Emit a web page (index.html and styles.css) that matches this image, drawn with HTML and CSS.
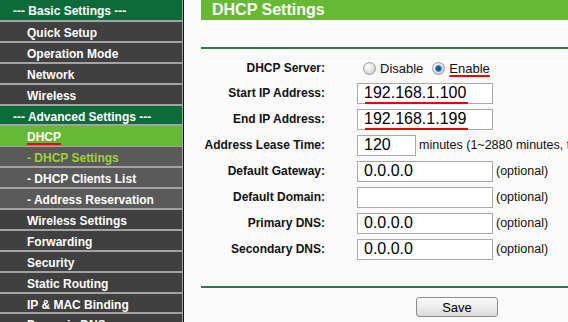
FILE: index.html
```html
<!DOCTYPE html>
<html>
<head>
<meta charset="utf-8">
<link rel="stylesheet" href="styles.css">
</head>
<body>
<div class="page">
  <nav class="sidebar">
    <div class="item section first">--- Basic Settings ---</div>
    <div class="item">Quick Setup</div>
    <div class="item">Operation Mode</div>
    <div class="item">Network</div>
    <div class="item">Wireless</div>
    <div class="item section">--- Advanced Settings ---</div>
    <div class="item active"><span class="mark">DHCP</span></div>
    <div class="item sub current">- DHCP Settings</div>
    <div class="item sub">- DHCP Clients List</div>
    <div class="item sub">- Address Reservation</div>
    <div class="item">Wireless Settings</div>
    <div class="item">Forwarding</div>
    <div class="item">Security</div>
    <div class="item">Static Routing</div>
    <div class="item">IP &amp; MAC Binding</div>
    <div class="item">Dynamic DNS</div>
  </nav>
  <main class="content">
    <h1 class="title">DHCP Settings</h1>
    <div class="rule top"></div>
    <div class="form">
      <div class="lbl">DHCP Server:</div>
      <div class="field">
        <span class="radio first-radio"></span><span class="rtext">Disable</span>
        <span class="radio checked"></span><span class="rtext"><span class="mark">Enable</span></span>
      </div>

      <div class="lbl">Start IP Address:</div>
      <div class="field"><span class="inwrap marked"><input class="inp" value="192.168.1.100"></span></div>

      <div class="lbl">End IP Address:</div>
      <div class="field"><span class="inwrap marked"><input class="inp" value="192.168.1.199"></span></div>

      <div class="lbl">Address Lease Time:</div>
      <div class="field"><input class="inp short" value="120"><span class="note">minutes (1~2880 minutes, the default value is 120)</span></div>

      <div class="lbl">Default Gateway:</div>
      <div class="field"><input class="inp" value="0.0.0.0"><span class="note">(optional)</span></div>

      <div class="lbl">Default Domain:</div>
      <div class="field"><input class="inp" value=""><span class="note">(optional)</span></div>

      <div class="lbl">Primary DNS:</div>
      <div class="field"><input class="inp" value="0.0.0.0"><span class="note">(optional)</span></div>

      <div class="lbl">Secondary DNS:</div>
      <div class="field"><input class="inp" value="0.0.0.0"><span class="note">(optional)</span></div>
    </div>
    <div class="rule bottom"></div>
    <div class="actions"><button class="btn">Save</button></div>
  </main>
</div>
</body>
</html>
```

FILE: styles.css
```css
html, body {
  margin: 0;
  padding: 0;
  height: 322px;
  overflow: hidden;
  background: #fafafa;
  font-family: "Liberation Sans", Arial, sans-serif;
}

.page {
  display: flex;
  height: 322px;
  overflow: hidden;
}

.sidebar {
  width: 182px;
  flex: none;
  background: #404040;
  border-right: 1px solid #a3a3a3;
  box-shadow: 1px 0 0 #151515;
  margin-right: 1px;
}

.item {
  height: 16.9px;
  line-height: 18.9px;
  padding-top: 2px;
  border-bottom: 2px solid #a3a3a3;
  background: #404040;
  color: #fff;
  font-weight: bold;
  font-size: 12px;
  padding-left: 27px;
  white-space: nowrap;
}

.item.first {
  height: 18px;
  line-height: 19px;
}

.item.section {
  background: #0b6c3a;
  padding-left: 13px;
}

.item.active {
  background: #66b933;
  border-bottom-width: 1px;
  height: 17.9px;
}

.item.sub {
  background: #5a5a5a;
}

.item.current {
  color: #9fd03c;
}

.mark {
  text-decoration: underline;
  text-decoration-color: #e8000b;
  text-decoration-thickness: 2px;
  text-underline-offset: 2px;
}

.content {
  flex: 1;
  min-width: 0;
  margin-left: 17px;
  overflow: hidden;
}

.title {
  margin: 0;
  height: 20px;
  line-height: 20px;
  background: #66b933;
  color: #fff;
  font-size: 16px;
  font-weight: bold;
  padding-left: 11px;
  white-space: nowrap;
}

.rule {
  height: 2px;
  background: #2a7a4c;
}

.rule.top {
  margin-top: 27px;
}

.rule.bottom {
  margin-top: 24px;
}

.form {
  display: grid;
  grid-template-columns: 124px 1fr;
  grid-template-rows: 24px;
  grid-auto-rows: 26px;
  column-gap: 32px;
  align-items: center;
  padding-top: 7px;
}

.lbl {
  text-align: right;
  font-weight: bold;
  font-size: 12px;
  color: #111;
  white-space: nowrap;
}

.field {
  display: flex;
  align-items: center;
  white-space: nowrap;
  font-size: 13px;
  color: #111;
}

.radio {
  width: 11px;
  height: 11px;
  border-radius: 50%;
  border: 1px solid #9a9a9a;
  background: radial-gradient(circle at 40% 35%, #ffffff 0, #e6e6e6 45%, #bdbdbd 100%);
  flex: none;
}

.radio.first-radio {
  margin-left: 6px;
}

.radio.checked {
  margin-left: 9px;
  background:
    radial-gradient(circle at 50% 50%, #0f3f63 0, #1f6fa6 2.3px, #58a8dc 3.3px, rgba(255,255,255,0) 3.8px),
    radial-gradient(circle at 40% 35%, #ffffff 0, #e6e6e6 45%, #bdbdbd 100%);
}

.rtext {
  margin-left: 4px;
}

.inwrap {
  position: relative;
  display: inline-block;
}

.inwrap.marked::after {
  content: "";
  position: absolute;
  left: 8px;
  width: 103px;
  bottom: 0;
  height: 2px;
  background: #e8000b;
}

.inp {
  box-sizing: border-box;
  width: 136px;
  height: 21px;
  margin: 0;
  border: 1px solid #a9a9a9;
  background: #fff;
  padding: 0 4px 0 6px;
  font-family: "Liberation Sans", Arial, sans-serif;
  font-size: 16px;
  color: #000;
  display: block;
  flex: none;
}

.inp.short {
  width: 59px;
}

.note {
  margin-left: 3px;
  font-size: 12.5px;
}

.actions {
  padding-left: 215px;
  padding-top: 9px;
}

.btn {
  box-sizing: border-box;
  width: 82px;
  height: 20px;
  margin: 0;
  padding: 0;
  border: 1px solid #8c8c8c;
  border-radius: 3px;
  background: linear-gradient(#fbfbfb, #ececec 50%, #dadada);
  font-family: "Liberation Sans", Arial, sans-serif;
  font-size: 13px;
  color: #000;
}
```
